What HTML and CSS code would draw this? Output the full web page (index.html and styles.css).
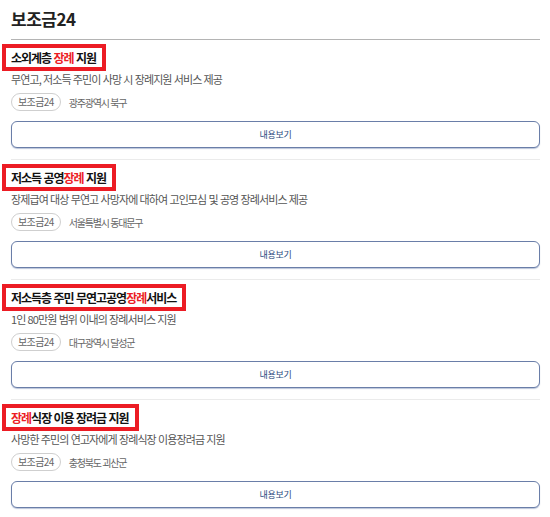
FILE: index.html
```html
<!DOCTYPE html>
<html lang="ko">
<head>
    <meta charset="UTF-8">
    <meta name="viewport" content="width=device-width, initial-scale=1.0">
    <title>보조금24</title>
    <link rel="stylesheet" href="styles.css">
</head>
<body>
    <div class="page">
        <h1 class="head">보조금24</h1>

        <div class="list">
            <div class="card">
                <h2 class="title">소외계층 <em>장례</em> 지원</h2>
                <p class="desc">무연고, 저소득 주민이 사망 시 장례지원 서비스 제공</p>
                <div class="meta">
                    <span class="badge">보조금24</span>
                    <span class="place">광주광역시 북구</span>
                </div>
                <button class="more">내용보기</button>
            </div>
            <div class="card">
                <h2 class="title">저소득 공영<em>장례</em> 지원</h2>
                <p class="desc">장제급여 대상 무연고 사망자에 대하여 고인모심 및 공영 장례서비스 제공</p>
                <div class="meta">
                    <span class="badge">보조금24</span>
                    <span class="place">서울특별시 동대문구</span>
                </div>
                <button class="more">내용보기</button>
            </div>
            <div class="card">
                <h2 class="title">저소득층 주민 무연고공영<em>장례</em>서비스</h2>
                <p class="desc">1인 80만원 범위 이내의 장례서비스 지원</p>
                <div class="meta">
                    <span class="badge">보조금24</span>
                    <span class="place">대구광역시 달성군</span>
                </div>
                <button class="more">내용보기</button>
            </div>
            <div class="card">
                <h2 class="title"><em>장례</em>식장 이용 장려금 지원</h2>
                <p class="desc">사망한 주민의 연고자에게 장례식장 이용장려금 지원</p>
                <div class="meta">
                    <span class="badge">보조금24</span>
                    <span class="place">충청북도 괴산군</span>
                </div>
                <button class="more">내용보기</button>
            </div>
        </div>
    </div>
</body>
</html>
```

FILE: styles.css
```css
body{
    margin:0;
    padding:0;
    background-color: #fff;
    font-family: "Noto Sans CJK KR", "Noto Sans", sans-serif;
    color:#222;
}

.page{
    width:529px;
    padding-left:11px;
}

.head{
    margin:0;
    padding-top:7px;
    height:40px;
    font-size:17px;
    line-height:24px;
    font-weight:700;
    letter-spacing:-0.5px;
    border-bottom:1px solid #b4b4b4;
    box-sizing: border-box;
}

.card{
    padding-top:4px;
    padding-bottom:11px;
    border-bottom:1px solid #ebebeb;
}
.card:last-child{
    border-bottom:none;
}

.title{
    display:inline-block;
    margin:0 0 0 -9px;
    padding:0 6px 0 5px;
    border:4px solid #ec1c24;
    font-size:12px;
    line-height:19px;
    font-weight:700;
    letter-spacing:-1px;
    color:#111;
}
.title em{
    font-style: normal;
    color:#ec1c24;
}

.desc{
    margin:0;
    font-size:11px;
    line-height:16px;
    letter-spacing:-0.9px;
    color:#555;
}

.meta{
    display:flex;
    align-items:center;
    gap:8px;
    margin-top:6px;
}
.badge{
    height:18px;
    padding:0 6px;
    border:1px solid #cfcfcf;
    border-radius:10px;
    box-sizing: border-box;
    font-size:10px;
    line-height:16px;
    letter-spacing:-0.6px;
    color:#666;
}
.place{
    font-size:10px;
    letter-spacing:-1.2px;
    color:#666;
}

.more{
    display:block;
    width:100%;
    height:27px;
    margin-top:10px;
    background:#fff;
    border:1px solid #6a7ea8;
    border-radius:6px;
    box-shadow: 0 1px 1px rgba(60,90,150,0.35);
    font-family: inherit;
    font-size:9px;
    letter-spacing:-0.3px;
    color:#2c4a7e;
    cursor:pointer;
}
```
